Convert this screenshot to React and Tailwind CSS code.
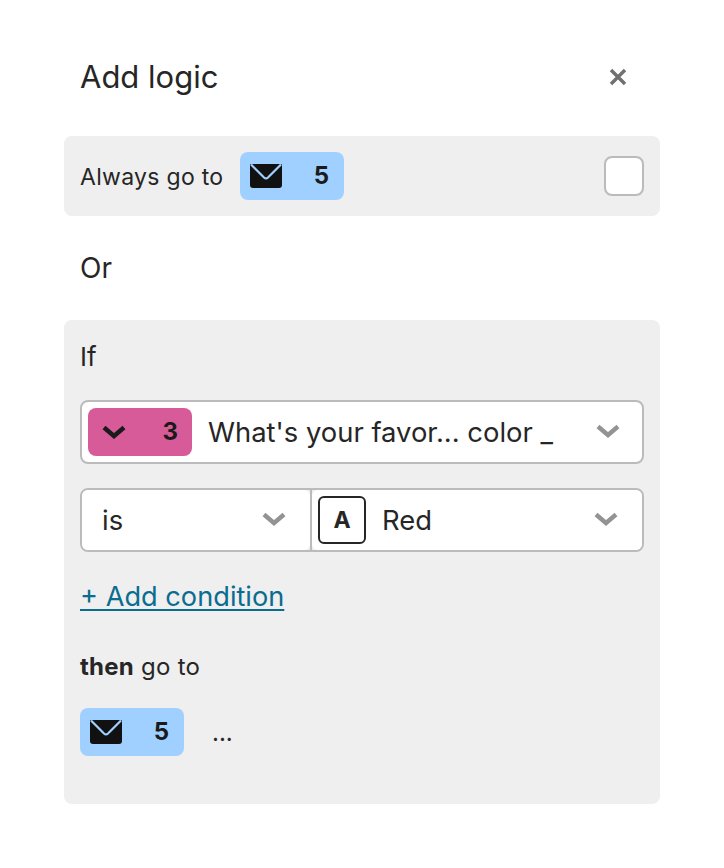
import React from "react";

const Chevron = ({ className }) => (
  <svg viewBox="0 0 24 14" className={className} fill="none" stroke="currentColor" strokeWidth="4.4">
    <path d="M2 2.5 L12 11 L22 2.5" />
  </svg>
);

const MailBadge = () => (
  <div className="flex h-12 w-[104px] items-center justify-between rounded-lg bg-[#9fd0ff] pl-[10px] pr-[15px]">
    <svg viewBox="0 0 32 24" className="h-6 w-8">
      <path
        d="M0 1 a1 1 0 0 1 1 -1 H31 a1 1 0 0 1 1 1 V21 a3 3 0 0 1 -3 3 H3 a3 3 0 0 1 -3 -3 Z"
        fill="#111111"
      />
      <path d="M1 0.5 L14 13.5 a3 3 0 0 0 4 0 L31 0.5" fill="none" stroke="#9fd0ff" strokeWidth="2.2" />
    </svg>
    <span className="text-[24px] font-bold text-[#1a1a1a]">5</span>
  </div>
);

export default function App() {
  return (
    <div
      className="min-h-screen bg-white pb-16 pl-16 pr-16 text-[#262626]"
      style={{ fontFamily: "Inter, sans-serif" }}
    >
      {/* Header */}
      <div className="flex h-[136px] items-center justify-between pl-4 pr-[33px] pt-[18px]">
        <h1 className="text-[31px] font-normal leading-9">Add logic</h1>
        <svg viewBox="0 0 18 18" className="h-[18px] w-[18px] text-[#707070]" fill="none" stroke="currentColor" strokeWidth="3.4">
          <path d="M2 2 L16 16 M16 2 L2 16" />
        </svg>
      </div>

      {/* Always go to */}
      <div className="flex h-20 items-center rounded-lg bg-[#efefef] pl-4 pr-4">
        <span className="mr-4 w-[144px] pt-0.5 text-[23px] tracking-[0.3px]">Always go to</span>
        <MailBadge />
        <div className="ml-auto h-10 w-10 rounded-lg border-2 border-[#bbbbbb] bg-white" />
      </div>

      <div className="flex h-[104px] items-center pl-4 text-[28px]">Or</div>

      {/* If panel */}
      <div className="h-[484px] rounded-lg bg-[#efefef] px-4 pt-5">
        <div className="flex h-8 items-center text-[26px]">If</div>

        <div className="mt-7 flex h-16 items-center rounded-lg border-2 border-[#bbbbbb] bg-white pl-1.5 pr-[22px]">
          <div className="flex h-12 w-[104px] items-center justify-between rounded-lg bg-[#d65b98] pl-[14px] pr-[14px]">
            <Chevron className="h-[14px] w-6 text-[#1a1a1a]" />
            <span className="text-[24px] font-bold text-[#1a1a1a]">3</span>
          </div>
          <span className="ml-4 pt-px text-[27.4px]">What's your favor... color _</span>
          <Chevron className="mb-0.5 ml-auto h-[14px] w-6 text-[#939393]" />
        </div>

        <div className="mt-6 flex h-16 rounded-lg border-2 border-[#bbbbbb] bg-[#efefef]">
          <div className="flex w-[228px] items-center justify-between rounded-l-md rounded-r-md bg-white pl-5 pr-6">
            <span className="pt-px text-[27.4px]">is</span>
            <Chevron className="mb-0.5 h-[14px] w-6 text-[#939393]" />
          </div>
          <div className="w-0.5 bg-[#bbbbbb]" />
          <div className="flex flex-1 items-center rounded-l-md rounded-r-md bg-white pl-1.5 pr-[24px]">
            <div className="flex h-12 w-12 items-center justify-center rounded-md border-2 border-[#262626] text-[23px] font-bold">
              A
            </div>
            <span className="ml-4 pt-px text-[27.4px]">Red</span>
            <Chevron className="mb-0.5 ml-auto h-[14px] w-6 text-[#939393]" />
          </div>
        </div>

        <a href="#" className="mt-7 block text-[27.2px] leading-[34px] text-[#0a6c8f] underline underline-offset-[3px]">
          + Add condition
        </a>

        <p className="mt-[39px] text-[24px] leading-[28px] tracking-[0.25px]">
          <span className="font-bold">then</span> go to
        </p>

        <div className="mt-[27px] flex items-center">
          <MailBadge />
          <span className="ml-7 pt-0.5 text-[24px]">...</span>
        </div>
      </div>
    </div>
  );
}
